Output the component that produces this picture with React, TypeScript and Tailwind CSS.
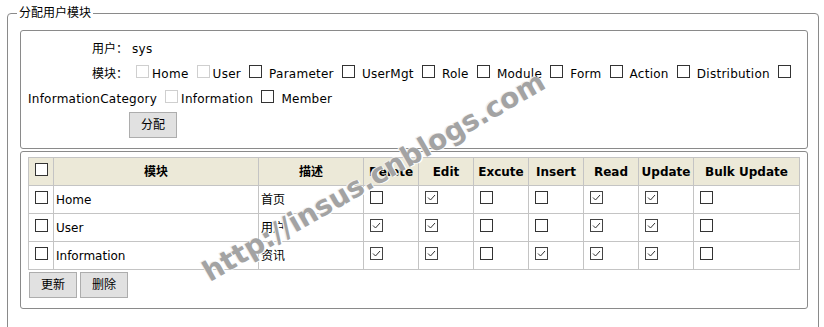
import clsx from 'clsx'

const font = "font-['DejaVu_Sans','Noto_Sans_CJK_SC',sans-serif]"

function Box({ checked = false, disabled = false }: { checked?: boolean; disabled?: boolean }) {
  return (
    <span
      className={clsx(
        'relative inline-block h-[13px] w-[13px] border bg-white align-baseline ml-[4px] mr-[3px]',
        disabled ? 'border-[#cfcfcf]' : checked ? 'border-[#444]' : 'border-[#333]'
      )}
    >
      {checked && (
        <svg className="absolute inset-0" width="11" height="11" viewBox="0 0 11 11">
          <path d="M2 5.5 L4.5 8 L9 3" fill="none" stroke="#333" strokeWidth="1" />
        </svg>
      )}
    </span>
  )
}

const topModules = [
  { label: 'Home', disabled: true },
  { label: 'User', disabled: true },
  { label: 'Parameter' },
  { label: 'UserMgt' },
  { label: 'Role' },
  { label: 'Module' },
  { label: 'Form' },
  { label: 'Action' },
  { label: 'Distribution' },
]

const perms = ['Delete', 'Edit', 'Excute', 'Insert', 'Read', 'Update', 'Bulk Update']

const rows = [
  { name: 'Home', desc: '首页', flags: [false, true, false, false, true, true, false] },
  { name: 'User', desc: '用户', flags: [true, true, false, false, true, true, false] },
  { name: 'Information', desc: '资讯', flags: [true, true, false, true, true, true, false] },
]

function Btn({ children, className }: { children: React.ReactNode; className?: string }) {
  return (
    <button
      className={clsx(
        'h-[26px] w-[48px] border border-[#adadad] bg-[#e1e1e1] text-[12px] tracking-normal text-black',
        className
      )}
    >
      {children}
    </button>
  )
}

export default function App() {
  return (
    <div className={clsx('relative h-[327px] w-[824px] overflow-hidden bg-white text-[12px] text-black', font)}>
      <div className="pl-[7px]">
        <fieldset className="mt-[5px] w-[812px] rounded-[4px] border border-[#8a8a8a] pl-[12px] pr-[10px] pt-[9px] pb-[40px]">
          <legend className="ml-[-3px] px-[2px] leading-[16px]">分配用户模块</legend>

          <div className="rounded-[3px] border border-[#8a8a8a] px-[7px] pt-[6px] pb-[10px] tracking-[0.25px]">
            <div className="leading-[25px]">
              <span className="inline-block w-[100px] text-right tracking-normal">用户：</span> sys
            </div>
            <div className="leading-[25px]">
              <span className="inline-block w-[100px] text-right tracking-normal">模块：</span>{' '}
              {topModules.map((m) => (
                <span key={m.label}>
                  <Box disabled={m.disabled} />
                  {m.disabled ? '' : ' '}
                  {m.label}{' '}
                </span>
              ))}
              <Box />
              <br />
              InformationCategory <Box disabled />Information <Box /> Member
            </div>
            <Btn className="ml-[101px] block">分配</Btn>
          </div>

          <div className="mt-[2px] rounded-[3px] border border-[#8a8a8a] px-[7px] pt-[5px] pb-[10px]">
            <table className="w-[771px] table-fixed border-collapse">
              <colgroup>
                <col className="w-[25px]" />
                <col className="w-[205px]" />
                <col className="w-[105px]" />
                {perms.slice(0, 6).map((p) => (
                  <col key={p} className="w-[55px]" />
                ))}
                <col className="w-[106px]" />
              </colgroup>
              <thead>
                <tr className="h-[28px] bg-[#ece9d8]">
                  <th className="border border-[#c4c4c4] px-[2px] text-left">
                    <Box />
                  </th>
                  <th className="border border-[#c4c4c4] font-bold">模块</th>
                  <th className="border border-[#c4c4c4] font-bold">描述</th>
                  {perms.map((p) => (
                    <th key={p} className="whitespace-nowrap border border-[#c4c4c4] font-bold">
                      {p}
                    </th>
                  ))}
                </tr>
              </thead>
              <tbody>
                {rows.map((r) => (
                  <tr key={r.name} className="h-[28px]">
                    <td className="border border-[#c4c4c4] px-[2px]">
                      <Box />
                    </td>
                    <td className="border border-[#c4c4c4] px-[2px]">{r.name}</td>
                    <td className="border border-[#c4c4c4] px-[2px]">{r.desc}</td>
                    {r.flags.map((f, i) => (
                      <td key={i} className="border border-[#c4c4c4] px-[2px]">
                        <Box checked={f} />
                      </td>
                    ))}
                  </tr>
                ))}
              </tbody>
            </table>
            <div className="mt-[2px] flex gap-[3px] pl-[1px]">
              <Btn>更新</Btn>
              <Btn>删除</Btn>
            </div>
          </div>
        </fieldset>
      </div>

      <span className="pointer-events-none absolute left-[374px] top-[177px] -translate-x-1/2 -translate-y-1/2 -rotate-30 whitespace-nowrap text-[28px] font-bold text-[#a3a3a3] [text-shadow:1px_1px_0_#fff,-1px_-1px_0_#eee]">
        http://insus.cnblogs.com
      </span>
    </div>
  )
}
